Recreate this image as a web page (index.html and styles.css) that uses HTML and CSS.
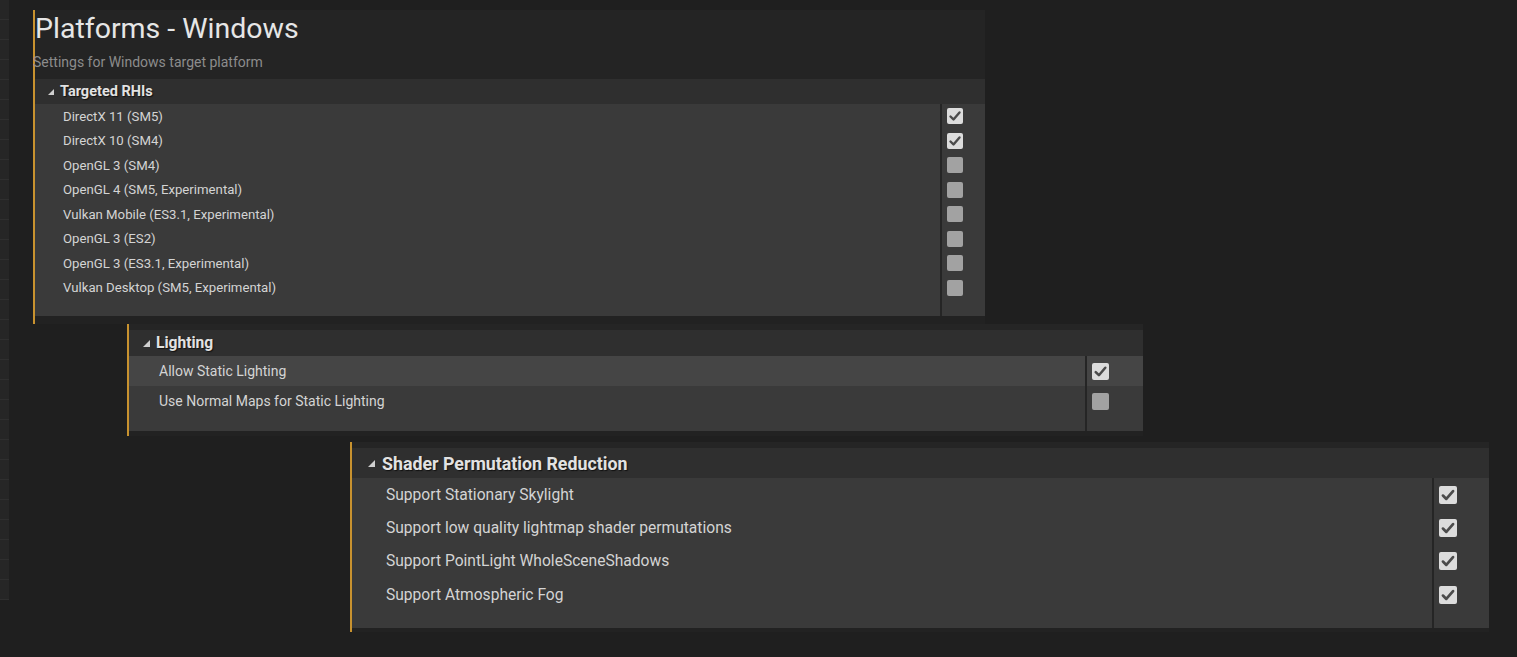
FILE: index.html
```html
<!DOCTYPE html>
<html>
<head>
<meta charset="utf-8">
<link rel="stylesheet" href="styles.css">
</head>
<body>
<div class="canvas">
  <div class="edge"></div>
  <div class="stack">
    <section class="panel p1">
      <div class="head">
        <h1>Platforms - Windows</h1>
        <p>Settings for Windows target platform</p>
      </div>
      <div class="cat"><span class="tri"></span>Targeted RHIs</div>
      <div class="rows">
        <div class="row"><span class="label">DirectX 11 (SM5)</span><span class="val"><span class="cb on"><svg viewBox="0 0 16 16"><path d="M3.5 8.5 L6.5 11.5 L12.5 4.5"/></svg></span></span></div>
        <div class="row"><span class="label">DirectX 10 (SM4)</span><span class="val"><span class="cb on"><svg viewBox="0 0 16 16"><path d="M3.5 8.5 L6.5 11.5 L12.5 4.5"/></svg></span></span></div>
        <div class="row"><span class="label">OpenGL 3 (SM4)</span><span class="val"><span class="cb"></span></span></div>
        <div class="row"><span class="label">OpenGL 4 (SM5, Experimental)</span><span class="val"><span class="cb"></span></span></div>
        <div class="row"><span class="label">Vulkan Mobile (ES3.1, Experimental)</span><span class="val"><span class="cb"></span></span></div>
        <div class="row"><span class="label">OpenGL 3 (ES2)</span><span class="val"><span class="cb"></span></span></div>
        <div class="row"><span class="label">OpenGL 3 (ES3.1, Experimental)</span><span class="val"><span class="cb"></span></span></div>
        <div class="row"><span class="label">Vulkan Desktop (SM5, Experimental)</span><span class="val"><span class="cb"></span></span></div>
        <div class="row spacer"><span class="label"></span><span class="val"></span></div>
      </div>
      <div class="foot"></div>
    </section>

    <section class="panel p2">
      <div class="top"></div>
      <div class="cat"><span class="tri"></span>Lighting</div>
      <div class="rows">
        <div class="row hl"><span class="label">Allow Static Lighting</span><span class="val"><span class="cb on"><svg viewBox="0 0 16 16"><path d="M3.5 8.5 L6.5 11.5 L12.5 4.5"/></svg></span></span></div>
        <div class="row"><span class="label">Use Normal Maps for Static Lighting</span><span class="val"><span class="cb"></span></span></div>
        <div class="row spacer"><span class="label"></span><span class="val"></span></div>
      </div>
      <div class="foot"></div>
    </section>

    <section class="panel p3">
      <div class="top"></div>
      <div class="cat"><span class="tri"></span>Shader Permutation Reduction</div>
      <div class="rows">
        <div class="row"><span class="label">Support Stationary Skylight</span><span class="val"><span class="cb on"><svg viewBox="0 0 16 16"><path d="M3.5 8.5 L6.5 11.5 L12.5 4.5"/></svg></span></span></div>
        <div class="row"><span class="label">Support low quality lightmap shader permutations</span><span class="val"><span class="cb on"><svg viewBox="0 0 16 16"><path d="M3.5 8.5 L6.5 11.5 L12.5 4.5"/></svg></span></span></div>
        <div class="row"><span class="label">Support PointLight WholeSceneShadows</span><span class="val"><span class="cb on"><svg viewBox="0 0 16 16"><path d="M3.5 8.5 L6.5 11.5 L12.5 4.5"/></svg></span></span></div>
        <div class="row"><span class="label">Support Atmospheric Fog</span><span class="val"><span class="cb on"><svg viewBox="0 0 16 16"><path d="M3.5 8.5 L6.5 11.5 L12.5 4.5"/></svg></span></span></div>
        <div class="row spacer"><span class="label"></span><span class="val"></span></div>
      </div>
      <div class="foot"></div>
    </section>
  </div>
</div>
</body>
</html>
```

FILE: styles.css
```css
html, body {
  margin: 0;
  padding: 0;
  background: #1f1f1f;
  font-family: Roboto, "Noto Sans", "Liberation Sans", sans-serif;
  color: #d2d2d2;
}

.canvas {
  display: flex;
  width: 1517px;
  height: 657px;
  overflow: hidden;
}

.edge {
  width: 9px;
  height: 600px;
  flex: none;
  background: repeating-linear-gradient(to bottom, #262626 0, #262626 19px, #2f2f2f 19px, #2f2f2f 20px);
}

.stack {
  flex: 1;
  display: flex;
  flex-direction: column;
  padding-top: 10px;
}

.panel {
  border-left: 2px solid #c8922f;
  background: #242424;
  display: flex;
  flex-direction: column;
}

.head h1 {
  margin: 0;
  padding-top: 2px;
  font-size: 28.5px;
  line-height: 33px;
  font-weight: 400;
  color: #e6e6e6;
}

.head p {
  margin: 8px 0 0 -2px;
  padding-bottom: 8px;
  font-size: 14px;
  line-height: 18px;
  color: #8c8c8c;
}

.cat {
  display: flex;
  align-items: center;
  background: #2f2f2f;
  font-weight: 700;
  color: #e2e2e2;
  text-shadow: 1px 1px 1px #111;
}

.tri {
  width: 0;
  height: 0;
  border-left: 7px solid transparent;
  border-bottom: 7px solid #cfcfcf;
  flex: none;
}

.rows {
  display: flex;
  flex-direction: column;
  background: #3a3a3a;
}

.row {
  display: flex;
  align-items: stretch;
}

.row.hl {
  background: #454545;
}

.label {
  flex: 1;
  display: flex;
  align-items: center;
  color: #d4d4d4;
  white-space: nowrap;
}

.val {
  flex: none;
  display: flex;
  align-items: center;
  border-left: 2px solid #252525;
  box-sizing: border-box;
}

.cb {
  display: block;
  border-radius: 2px;
  background: #a2a2a2;
}

.cb.on {
  background: #dcdcdc;
}

.cb svg {
  display: block;
  width: 100%;
  height: 100%;
  fill: none;
  stroke: #4b4b4b;
  stroke-width: 2.4;
  stroke-linecap: round;
  stroke-linejoin: round;
}

.foot {
  background: #222222;
}

.top {
  background: #252525;
}

/* Panel 1 */
.p1 {
  margin-left: 24px;
  width: 950px;
}
.p1 .cat {
  height: 25px;
  font-size: 14.5px;
  padding-left: 13px;
}
.p1 .tri {
  margin-right: 6px;
  border-left-width: 6px;
  border-bottom-width: 6px;
}
.p1 .row {
  height: 24.5px;
}
.p1 .label {
  padding-left: 28px;
  font-size: 13.2px;
}
.p1 .val {
  width: 45px;
  padding-left: 5px;
}
.p1 .cb {
  width: 16px;
  height: 16px;
}
.p1 .spacer {
  height: 16px;
}
.p1 .foot {
  height: 8px;
}

/* Panel 2 */
.p2 {
  margin-left: 118px;
  width: 1014px;
}
.p2 .top {
  height: 6px;
}
.p2 .cat {
  height: 26px;
  font-size: 15.6px;
  padding-left: 14px;
}
.p2 .tri {
  margin-right: 6px;
}
.p2 .row {
  height: 30px;
}
.p2 .label {
  padding-left: 30px;
  font-size: 14px;
}
.p2 .val {
  width: 58px;
  padding-left: 5px;
}
.p2 .cb {
  width: 17px;
  height: 17px;
}
.p2 .spacer {
  height: 15px;
}
.p2 .foot {
  height: 5px;
}

/* Panel 3 */
.p3 {
  margin-left: 341px;
  margin-top: 6px;
  width: 1137px;
}
.p3 .top {
  height: 6px;
}
.p3 .cat {
  height: 30px;
  font-size: 17.8px;
  padding-left: 16px;
}
.p3 .tri {
  margin-right: 7px;
}
.p3 .row {
  height: 33.3px;
}
.p3 .label {
  padding-left: 34px;
  font-size: 15.6px;
}
.p3 .val {
  width: 57px;
  padding-left: 5px;
}
.p3 .cb {
  width: 18px;
  height: 18px;
}
.p3 .spacer {
  height: 17px;
}
.p3 .foot {
  height: 4px;
}
```
